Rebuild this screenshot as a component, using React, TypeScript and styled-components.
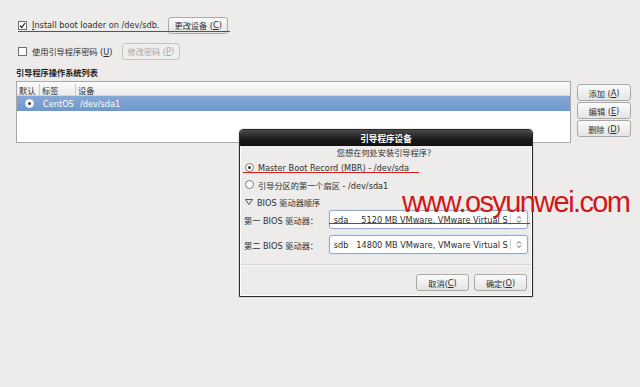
import styled, { createGlobalStyle } from 'styled-components'

const GlobalStyle = createGlobalStyle`
  html, body { margin: 0; padding: 0; background: #edeceb; }
  body { font-family: "DejaVu Sans", "Noto Sans CJK SC", sans-serif; font-size: 8.2px; color: #2e2e2e; }
  #root { width: 640px; height: 387px; position: relative; overflow: hidden; }
`

const Page = styled.div`
  padding: 17px 9px 0 16px;
  display: flex;
  flex-direction: column;
`

const Row = styled.div<{ $mt?: number }>`
  display: flex;
  align-items: center;
  height: 16px;
  margin-top: ${p => p.$mt ?? 0}px;
  padding-left: 2px;
  gap: 5px;
`

const Check = styled.span`
  width: 7px;
  height: 7px;
  border: 1px solid #6e6e6e;
  background: #fff;
  display: inline-flex;
  align-items: center;
  justify-content: center;
  position: relative;
`

const Label = styled.span`
  color: #2e2e2e;
  white-space: nowrap;
  u { text-decoration: underline; }
`

const Btn = styled.button<{ $disabled?: boolean; $w?: number }>`
  font: inherit;
  height: 17px;
  min-width: ${p => p.$w ?? 0}px;
  padding: 0 5px;
  border: 1px solid ${p => (p.$disabled ? '#c4c4c4' : '#a9a9a9')};
  border-radius: 3px;
  background: ${p => (p.$disabled ? '#eeeeee' : 'linear-gradient(#fbfbfb, #e4e4e4)')};
  color: ${p => (p.$disabled ? '#a8a8a8' : '#2e2e2e')};
  white-space: nowrap;
  display: inline-flex;
  align-items: center;
  justify-content: center;
`

const SectionTitle = styled.div`
  font-weight: bold;
  margin-top: 9px;
  height: 10px;
  line-height: 10px;
  color: #222;
`

const ListArea = styled.div`
  display: flex;
  margin-top: 3px;
  gap: 6px;
`

const ListBox = styled.div`
  width: 553px;
  height: 60px;
  border: 1px solid #a8a8a8;
  background: #fff;
  display: flex;
  flex-direction: column;
`

const HeaderRow = styled.div`
  display: grid;
  grid-template-columns: 22px 36px 1fr;
  height: 13px;
  background: linear-gradient(#fafafa, #ececec);
  border-bottom: 1px solid #d6d6d6;
`

const HeaderCell = styled.div<{ $sep?: boolean }>`
  display: flex;
  align-items: center;
  padding-left: 2px;
  border-left: ${p => (p.$sep ? '1px solid #c8c8c8' : 'none')};
  margin: ${p => (p.$sep ? '2px 0' : '0')};
`

const SelRow = styled.div`
  display: grid;
  grid-template-columns: 26px 37px 1fr;
  height: 15px;
  align-items: center;
  background: linear-gradient(#85a9d6, #6f97cb);
  color: #fff;
`

const Radio = styled.span<{ $on?: boolean; $inv?: boolean }>`
  width: 7px;
  height: 7px;
  border-radius: 50%;
  border: 1px solid ${p => (p.$inv ? '#e8eef8' : '#7a7a7a')};
  background: #fff;
  display: inline-flex;
  align-items: center;
  justify-content: center;
  &::after {
    content: '';
    width: 3px;
    height: 3px;
    border-radius: 50%;
    background: ${p => (p.$on ? '#333' : 'transparent')};
  }
`

const RadioCell = styled.div`
  display: flex;
  padding-left: 8px;
`

const SideButtons = styled.div`
  display: flex;
  flex-direction: column;
  gap: 1px;
  padding-top: 3px;
`

const Dialog = styled.div`
  position: absolute;
  left: 239px;
  top: 129px;
  width: 292px;
  height: 166px;
  border: 1px solid #2a2a2a;
  border-radius: 4px 4px 0 0;
  background: #edeceb;
  display: flex;
  flex-direction: column;
  box-shadow: 0 0 0 1px rgba(0,0,0,0.08);
`

const TitleBar = styled.div`
  height: 16px;
  background: linear-gradient(#4a4a4a, #1a1a1a 60%, #101010);
  color: #fff;
  font-weight: bold;
  font-size: 8.6px;
  display: flex;
  align-items: center;
  justify-content: center;
  border-radius: 3px 3px 0 0;
`

const DialogBody = styled.div`
  flex: 1;
  display: flex;
  flex-direction: column;
  padding: 0 3px;
  border: 1px solid #fff;
  border-top: none;
`

const Question = styled.div`
  text-align: center;
  height: 12px;
  line-height: 12px;
  margin-top: 1px;
`

const OptRow = styled.div<{ $mt?: number }>`
  display: flex;
  align-items: center;
  gap: 4px;
  height: 13px;
  margin-top: ${p => p.$mt ?? 0}px;
  padding-left: 1px;
`

const Expander = styled.div`
  display: flex;
  align-items: center;
  gap: 4px;
  height: 13px;
  margin-top: 4px;
  padding-left: 1px;
`

const DriveRow = styled.div<{ $mt?: number }>`
  display: flex;
  align-items: center;
  margin-top: ${p => p.$mt ?? 0}px;
  height: 19px;
`

const DriveLabel = styled.span`
  width: 86px;
  white-space: nowrap;
`

const Combo = styled.div`
  width: 200px;
  height: 17px;
  border: 1px solid #98a9c4;
  border-radius: 3px;
  background: #fff;
  display: flex;
  align-items: center;
  box-shadow: 0 0 0 1px #dde5f0;
`

const ComboText = styled.span`
  flex: 1;
  padding-left: 4px;
  white-space: pre;
  overflow: hidden;
  color: #2e2e2e;
`

const ComboArrow = styled.span`
  width: 16px;
  height: 11px;
  border-left: 1px solid #cfcfcf;
  display: flex;
  align-items: center;
  justify-content: center;
`

const Separator = styled.div`
  height: 1px;
  background: #d6d5d4;
  border-bottom: 1px solid #f8f8f8;
  margin: 10px -3px 0;
`

const DialogButtons = styled.div`
  display: flex;
  justify-content: flex-end;
  gap: 5px;
  margin-top: 8px;
  padding-right: 1px;
`

const RedLine = styled.div<{ $x: number; $y: number; $w: number }>`
  position: absolute;
  left: ${p => p.$x}px;
  top: ${p => p.$y}px;
  width: ${p => p.$w}px;
  height: 1px;
  background: #d81c1c;
`

const Watermark = styled.div`
  position: absolute;
  left: 402px;
  top: 184px;
  font-family: "Liberation Sans", Arial, sans-serif;
  font-size: 29px;
  color: #d01818;
  letter-spacing: -1.6px;
  line-height: 36px;
  white-space: nowrap;
`

function Arrows() {
  return (
    <svg width="6" height="9" viewBox="0 0 6 9">
      <path d="M1 3.5 L3 1.5 L5 3.5 M1 5.5 L3 7.5 L5 5.5" fill="none" stroke="#555" strokeWidth="1" />
    </svg>
  )
}

function Tick() {
  return (
    <svg width="7" height="7" viewBox="0 0 7 7" style={{ position: 'absolute', left: 0, top: 0 }}>
      <path d="M1 3.5 L2.8 5.5 L6 1" fill="none" stroke="#222" strokeWidth="1.2" />
    </svg>
  )
}

function Triangle() {
  return (
    <svg width="8" height="6" viewBox="0 0 8 6">
      <path d="M0.5 0.5 H7.5 L4 5.5 Z" fill="none" stroke="#444" strokeWidth="0.9" />
    </svg>
  )
}

export default function App() {
  return (
    <>
      <GlobalStyle />
      <Page>
        <Row>
          <Check><Tick /></Check>
          <Label><u>I</u>nstall boot loader on /dev/sdb.</Label>
          <Btn style={{ marginLeft: 4 }}>更改设备 (<u>C</u>)</Btn>
        </Row>
        <Row $mt={10}>
          <Check />
          <Label>使用引导程序密码 (<u>U</u>)</Label>
          <Btn $disabled style={{ marginLeft: 4 }}>修改密码 (<u>P</u>)</Btn>
        </Row>
        <SectionTitle>引导程序操作系统列表</SectionTitle>
        <ListArea>
          <ListBox>
            <HeaderRow>
              <HeaderCell>默认</HeaderCell>
              <HeaderCell $sep>标签</HeaderCell>
              <HeaderCell $sep>设备</HeaderCell>
            </HeaderRow>
            <SelRow>
              <RadioCell><Radio $on $inv /></RadioCell>
              <span>CentOS</span>
              <span>/dev/sda1</span>
            </SelRow>
          </ListBox>
          <SideButtons>
            <Btn $w={54}>添加 (<u>A</u>)</Btn>
            <Btn $w={54}>编辑 (<u>E</u>)</Btn>
            <Btn $w={54}>删除 (<u>D</u>)</Btn>
          </SideButtons>
        </ListArea>
      </Page>

      <Dialog>
        <TitleBar>引导程序设备</TitleBar>
        <DialogBody>
          <Question>您想在何处安装引导程序？</Question>
          <OptRow $mt={2}>
            <Radio $on />
            <span>Master Boot Record (MBR) - /dev/sda</span>
          </OptRow>
          <OptRow $mt={4}>
            <Radio />
            <span>引导分区的第一个扇区 - /dev/sda1</span>
          </OptRow>
          <Expander>
            <Triangle />
            <span>BIOS 驱动器顺序</span>
          </Expander>
          <DriveRow $mt={2}>
            <DriveLabel>第一 BIOS 驱动器：</DriveLabel>
            <Combo>
              <ComboText>{'sda     5120 MB VMware, VMware Virtual S'}</ComboText>
              <ComboArrow><Arrows /></ComboArrow>
            </Combo>
          </DriveRow>
          <DriveRow $mt={6}>
            <DriveLabel>第二 BIOS 驱动器：</DriveLabel>
            <Combo>
              <ComboText>{'sdb   14800 MB VMware, VMware Virtual S'}</ComboText>
              <ComboArrow><Arrows /></ComboArrow>
            </Combo>
          </DriveRow>
          <Separator />
          <DialogButtons>
            <Btn $w={53}>取消(<u>C</u>)</Btn>
            <Btn $w={53}>确定(<u>O</u>)</Btn>
          </DialogButtons>
        </DialogBody>
      </Dialog>

      <RedLine $x={18} $y={31} $w={212} />
      <RedLine $x={243} $y={172} $w={176} />
      <RedLine $x={329} $y={223} $w={201} />
      <Watermark>www.osyunwei.com</Watermark>
    </>
  )
}
